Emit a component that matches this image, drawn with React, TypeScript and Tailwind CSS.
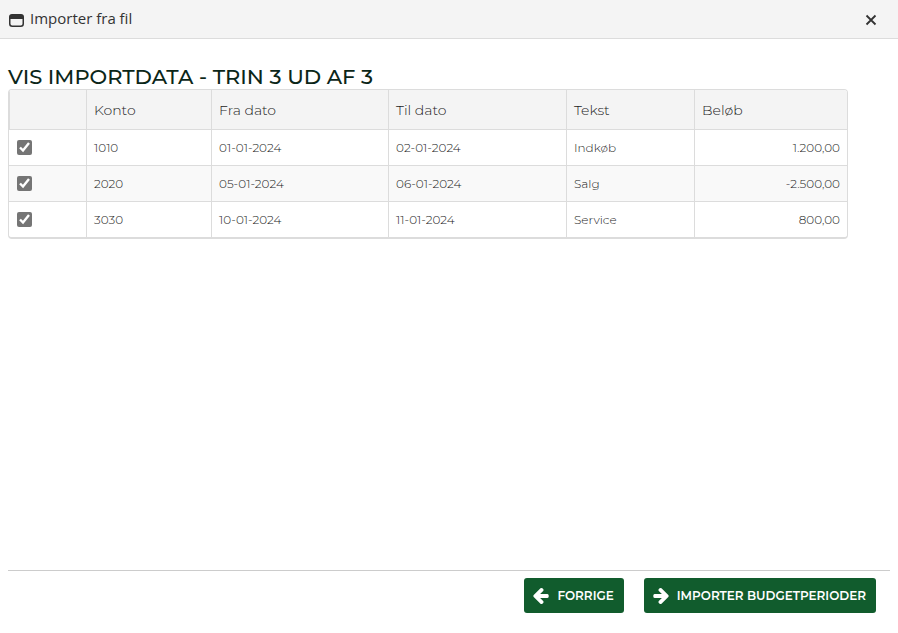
import React, { useState } from 'react';

interface BudgetLine {
  konto: string;
  fra: string;
  til: string;
  tekst: string;
  belob: string;
}

const LINES: BudgetLine[] = [
  { konto: '1010', fra: '01-01-2024', til: '02-01-2024', tekst: 'Indkøb', belob: '1.200,00' },
  { konto: '2020', fra: '05-01-2024', til: '06-01-2024', tekst: 'Salg', belob: '-2.500,00' },
  { konto: '3030', fra: '10-01-2024', til: '11-01-2024', tekst: 'Service', belob: '800,00' },
];

const COLUMNS = ['Konto', 'Fra dato', 'Til dato', 'Tekst', 'Beløb'];

export default function App() {
  const [selected, setSelected] = useState<boolean[]>(LINES.map(() => true));

  const toggle = (index: number) => {
    setSelected((prev) => prev.map((value, i) => (i === index ? !value : value)));
  };

  return (
    <div className="flex min-h-screen flex-col bg-white font-['Montserrat','Inter',sans-serif] text-[#1c1c1c]">
      {/* Title bar */}
      <header className="flex h-[39px] items-center border-b border-[#dcdcdc] bg-[#f4f4f4] pr-[21px] pl-[9px] text-[#333]">
        <WindowIcon />
        <h1 className="mb-0.5 ml-1.5 font-['Segoe_UI','Open_Sans',sans-serif] text-[15px] leading-5">Importer fra fil</h1>
        <button type="button" aria-label="Luk" className="ml-auto">
          <CloseIcon />
        </button>
      </header>

      {/* Import lines */}
      <main className="flex-1 px-2 pt-[26px]">
        <h2 className="text-[21px] leading-6 font-medium text-[#0b2618]">VIS IMPORTDATA - TRIN 3 UD AF 3</h2>
        <div className="max-w-[840px] overflow-hidden rounded border border-b-2 border-[#dcdcdc]">
          <table className="w-full table-fixed border-separate border-spacing-0 text-left">
            <colgroup>
              <col className="w-[78px]" />
              <col className="w-[125px]" />
              <col className="w-[177px]" />
              <col className="w-[178px]" />
              <col className="w-[128px]" />
              <col />
            </colgroup>
            <thead>
              <tr className="h-10 bg-[#f4f4f4] text-sm">
                <td className="border-r border-b border-l border-[#dcdcdc]" />
                {COLUMNS.map((name) => (
                  <th key={name} scope="col" className="border-r border-b border-[#dcdcdc] px-[7px] font-light last:border-r-0">
                    {name}
                  </th>
                ))}
              </tr>
            </thead>
            <tbody>
              {LINES.map((line, i) => (
                <tr key={line.konto} className="group h-9 text-xs even:bg-[#f9f9f9] last:h-[35px]">
                  <Cell>
                    <input
                      type="checkbox"
                      aria-label={`Vælg konto ${line.konto}`}
                      checked={selected[i]}
                      onChange={() => toggle(i)}
                      className="ml-px block size-[15px] accent-[#757575]"
                    />
                  </Cell>
                  <Cell>{line.konto}</Cell>
                  <Cell>{line.fra}</Cell>
                  <Cell>{line.til}</Cell>
                  <Cell>{line.tekst}</Cell>
                  <Cell right>{line.belob}</Cell>
                </tr>
              ))}
            </tbody>
          </table>
        </div>
      </main>

      {/* Actions */}
      <footer className="mx-2 flex justify-end gap-5 border-t border-[#ccc] pt-[7px] pr-3.5 pb-5">
        <ActionButton icon={<ArrowIcon />} label="FORRIGE" />
        <ActionButton icon={<ArrowIcon right />} label="IMPORTER BUDGETPERIODER" />
      </footer>
    </div>
  );
}

// ── Sub-components ──

function Cell({ children, right }: { children: React.ReactNode; right?: boolean }) {
  return (
    <td
      className={`border-r border-b border-[#dcdcdc] px-[7px] font-light group-last:border-b-0 last:border-r-0 ${right ? 'text-right' : ''}`}
    >
      {children}
    </td>
  );
}

function ActionButton({ icon, label }: { icon: React.ReactNode; label: string }) {
  return (
    <button
      type="button"
      className="flex h-[35px] items-center gap-2 rounded-[3px] bg-[#115c2d] pr-2.5 pl-[9px] text-xs font-semibold text-white"
    >
      {icon}
      {label}
    </button>
  );
}

function ArrowIcon({ right }: { right?: boolean }) {
  return (
    <svg viewBox="160 192 1536 1536" className="size-4 overflow-visible" fill="currentColor" aria-hidden="true">
      <path
        transform={right ? 'translate(1856 0) scale(-1 1)' : undefined}
        d="M1664 896v128q0 53-32.5 90.5t-84.5 37.5h-704l293 294q38 36 38 90t-38 90l-75 76q-37 37-90 37-52 0-91-37l-651-652q-37-37-37-90 0-52 37-91l651-650q38-38 91-38 52 0 90 38l75 74q38 38 38 91t-38 91l-293 293h704q52 0 84.5 37.5t32.5 90.5z"
      />
    </svg>
  );
}

function WindowIcon() {
  return (
    <svg width="15" height="13" viewBox="0 0 15 13" className="mt-0.5" aria-hidden="true">
      <rect x="0.75" y="0.75" width="13.5" height="11.5" rx="2.5" fill="none" stroke="#333" strokeWidth="1.5" />
      <path d="M0.5 5V3a2.5 2.5 0 0 1 2.5-2.5h9a2.5 2.5 0 0 1 2.5 2.5v2z" fill="#333" />
    </svg>
  );
}

function CloseIcon() {
  return (
    <svg width="12" height="12" viewBox="0 0 12 12" className="mt-0.5" aria-hidden="true">
      <path d="M1.5 1.5l9 9M10.5 1.5l-9 9" stroke="#333" strokeWidth="1.8" />
    </svg>
  );
}
